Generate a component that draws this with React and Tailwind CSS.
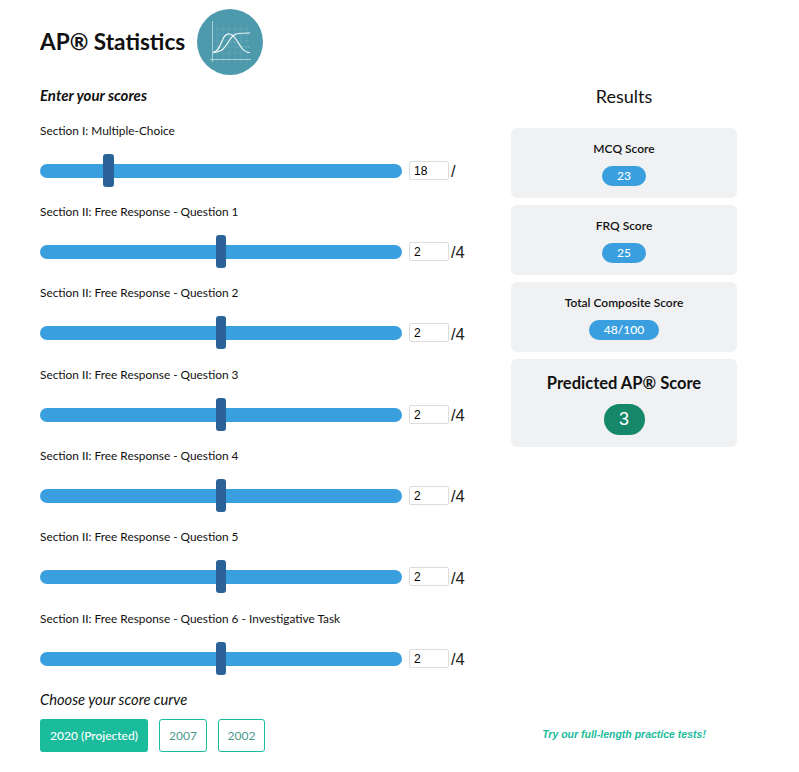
const rows = [
  { label: "Section I: Multiple-Choice", value: "18", max: "/", pos: 63 },
  { label: "Section II: Free Response - Question 1", value: "2", max: "/4", pos: 175.5 },
  { label: "Section II: Free Response - Question 2", value: "2", max: "/4", pos: 175.5 },
  { label: "Section II: Free Response - Question 3", value: "2", max: "/4", pos: 175.5 },
  { label: "Section II: Free Response - Question 4", value: "2", max: "/4", pos: 175.5 },
  { label: "Section II: Free Response - Question 5", value: "2", max: "/4", pos: 175.5 },
  { label: "Section II: Free Response - Question 6 - Investigative Task", value: "2", max: "/4", pos: 175.5 },
];

function Logo() {
  return (
    <svg width="66" height="66" viewBox="0 0 66 66" className="block">
      <circle cx="33" cy="33" r="33" fill="#4d9aac" />
      <g stroke="#ffffff" strokeOpacity="0.12" strokeWidth="0.6">
        <path d="M20 16V54M26 16V54M32 16V54M38 16V54M44 16V54M50 16V54M16 20H52M16 26H52M16 32H52M16 38H52M16 44H52" />
      </g>
      <path d="M15.5 12V53" stroke="#ffffff" strokeOpacity="0.5" strokeWidth="1" fill="none" />
      <path d="M13 50.5H54" stroke="#ffffff" strokeOpacity="0.5" strokeWidth="1" fill="none" />
      <path d="M16 43.5C24 43 27 40 30 35C33 30 36 25 41 24.5C45 24 50 24 53 24" stroke="#ffffff" strokeOpacity="0.9" strokeWidth="1.2" fill="none" />
      <path d="M16 43.5C21 43 23 37 25 32C27 27 30 24.5 33 25C37 25.5 40 32 44 38C47 42.5 50 43.5 53 43.5" stroke="#ffffff" strokeOpacity="0.9" strokeWidth="1.2" fill="none" />
      <path d="M22 42C27 41 31 34 34 33C38 32 44 39 52 38" stroke="#ffffff" strokeOpacity="0.5" strokeWidth="0.7" strokeDasharray="1 2" fill="none" />
    </svg>
  );
}

function Row({ label, value, max, pos }) {
  return (
    <div className="h-[81.33px] shrink-0">
      <div className="h-[15px] text-[11.85px] leading-[15px] text-[#111]">{label}</div>
      <div className="mt-[16.5px] flex h-[33px] items-center">
        <div className="relative h-[14px] w-[362px] shrink-0 rounded-full bg-[#3a9fdf]">
          <div className="absolute top-[-10px] h-[33px] w-[10.5px] rounded-[3px] bg-[#2b6297]" style={{ left: pos }} />
        </div>
        <input
          readOnly
          value={value}
          className="mb-[1px] ml-[7px] h-[19px] w-[40px] rounded-[2px] border border-[#dcdcdc] bg-white pt-[1px] pl-[4px] font-['Liberation_Sans',sans-serif] text-[12px] text-black outline-none"
        />
        <span className="mt-[2px] ml-[2px] font-['Liberation_Sans',sans-serif] text-[16.5px] leading-[19px] text-[#222]">{max}</span>
      </div>
    </div>
  );
}

function Card({ title, value, pill }) {
  return (
    <div className="flex h-[70px] flex-col items-center rounded-[6px] bg-[#f0f1f3] pt-[13px]">
      <div className="h-[15px] text-[12px] leading-[15px] font-semibold text-[#111]">{title}</div>
      <div className={`mt-[10px] flex h-[20px] items-center justify-center rounded-full bg-[#3a9fdf] text-[12px] font-medium text-white ${pill}`}>
        {value}
      </div>
    </div>
  );
}

export default function App() {
  return (
    <div className="flex h-[772px] w-[799px] overflow-hidden bg-white font-['Lato',sans-serif] text-black">
      <div className="ml-[40px] flex w-[471px] shrink-0 flex-col">
        <div className="mt-[9px] flex h-[66px] items-center">
          <h1 className="w-[145px] shrink-0 text-[22.6px] leading-[30px] font-bold whitespace-nowrap text-[#111]">AP® Statistics</h1>
          <div className="ml-[12px]"><Logo /></div>
        </div>
        <div className="mt-[11px] h-[18px] text-[15px] leading-[18px] font-bold italic text-[#111]">Enter your scores</div>
        <div className="mt-[18.6px] flex flex-col">
          {rows.map((r) => <Row key={r.label} {...r} />)}
        </div>
        <div className="mt-[-2.6px] h-[20px] text-[14.7px] leading-[20px] italic text-[#111]">Choose your score curve</div>
        <div className="mt-[10px] flex gap-[11px] text-[12px]">
          <div className="flex h-[33px] w-[108px] items-center justify-center rounded-[3px] bg-[#1abc9c] font-medium text-white">2020 (Projected)</div>
          <div className="flex h-[33px] w-[48px] items-center justify-center rounded-[3px] border border-[#1abc9c] text-[#4b9a8e]">2007</div>
          <div className="flex h-[33px] w-[47px] items-center justify-center rounded-[3px] border border-[#1abc9c] text-[#4b9a8e]">2002</div>
        </div>
      </div>
      <div className="flex w-[226px] shrink-0 flex-col">
        <div className="mt-[85px] h-[22px] text-center text-[18px] leading-[22px] text-[#111]">Results</div>
        <div className="mt-[21px] flex flex-col gap-[7px]">
          <Card title="MCQ Score" value="23" pill="w-[44px]" />
          <Card title="FRQ Score" value="25" pill="w-[44px]" />
          <Card title="Total Composite Score" value="48/100" pill="w-[70px]" />
          <div className="flex h-[88px] flex-col items-center rounded-[6px] bg-[#f0f1f3] pt-[13px]">
            <div className="h-[22px] text-[16.5px] leading-[22px] font-bold text-[#111]">Predicted AP® Score</div>
            <div className="mt-[10px] flex h-[31px] w-[41px] items-center justify-center rounded-full bg-[#168769] font-['Liberation_Sans',sans-serif] text-[18px] text-white">3</div>
          </div>
        </div>
        <div className="mt-[280px] text-center font-['Liberation_Sans',sans-serif] text-[10.5px] leading-[14px] font-bold italic text-[#1abc9c]">Try our full-length practice tests!</div>
      </div>
    </div>
  );
}
